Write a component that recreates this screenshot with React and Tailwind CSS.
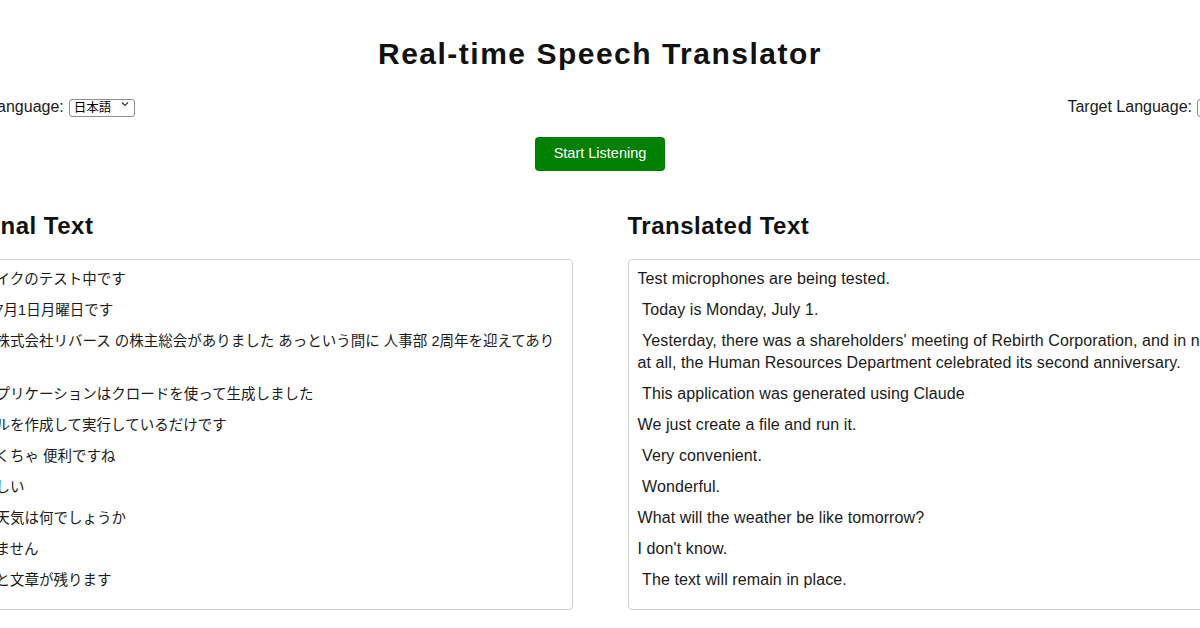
import React from 'react';

const original = [
  '現在マイクのテスト中です',
  '今日は7月1日月曜日です',
  '昨日は株式会社リバース の株主総会がありました あっという間に 人事部 2周年を迎えてありました',
  'このアプリケーションはクロードを使って生成しました',
  'ファイルを作成して実行しているだけです',
  'めちゃくちゃ 便利ですね',
  '素晴らしい',
  '明日の天気は何でしょうか',
  'わかりません',
  'ちゃんと文章が残ります',
];

const translated = [
  'Test microphones are being tested.',
  ' Today is Monday, July 1.',
  " Yesterday, there was a shareholders' meeting of Rebirth Corporation, and in no time at all, the Human Resources Department celebrated its second anniversary.",
  ' This application was generated using Claude',
  'We just create a file and run it.',
  ' Very convenient.',
  ' Wonderful.',
  'What will the weather be like tomorrow?',
  "I don't know.",
  ' The text will remain in place.',
];

function LangSelect({ value }) {
  return (
    <div className="relative inline-block">
      <select
        defaultValue={value}
        className="appearance-none h-[18px] w-[66px] border border-[#8e8e8e] rounded-[3px] bg-white pl-[4px] text-[12.5px] leading-[16px] text-black outline-none"
      >
        <option>日本語</option>
        <option>English</option>
      </select>
      <svg className="absolute right-[6px] top-[6px] pointer-events-none" width="8" height="6" viewBox="0 0 8 6">
        <path d="M1 1.5 L4 4.5 L7 1.5" fill="none" stroke="#333" strokeWidth="1.1" />
      </svg>
    </div>
  );
}

function Panel({ title, lines, textClass }) {
  return (
    <div className="flex flex-col">
      <h2 className="text-[24px] leading-[26px] font-bold tracking-[0.5px] text-[#111] mb-[20px]">{title}</h2>
      <div className="flex-1 border border-[#cfcfcf] rounded-[4px] pt-[8px] pb-[9px] pl-[9px] pr-[5px]">
        {lines.map((l, i) => (
          <p key={i} className={`leading-[22px] text-[#1a1a1a] mb-[9px] whitespace-pre-wrap ${textClass}`}>
            {l}
          </p>
        ))}
      </div>
    </div>
  );
}

export default function App() {
  return (
    <div
      className="w-[1200px] h-[628px] overflow-hidden bg-white"
      style={{ fontFamily: '"Liberation Sans", Arial, "Noto Sans CJK JP", sans-serif' }}
    >
      <div className="w-[1316px] ml-[-58px]">
        <h1 className="text-center text-[30px] leading-[34px] font-bold tracking-[1.5px] text-[#111] pt-[37px]">
          Real-time Speech Translator
        </h1>

        <div className="flex justify-between items-center mt-[26px] ml-[-9px] mr-[-5px] h-[20px] text-[16px] text-[#1a1a1a]">
          <div className="flex items-center gap-[5px]">
            <span>Source Language:</span>
            <LangSelect value="日本語" />
          </div>
          <div className="flex items-center gap-[5px]">
            <span>Target Language:</span>
            <LangSelect value="English" />
          </div>
        </div>

        <div className="flex justify-center mt-[20px]">
          <button className="h-[34px] w-[130px] rounded-[4px] bg-[#008000] text-white text-[14.5px]">
            Start Listening
          </button>
        </div>

        <div className="grid grid-cols-2 gap-[55px] mt-[42px]">
          <Panel title="Original Text" lines={original} textClass="text-[14.5px] pr-[4px]" />
          <Panel title="Translated Text" lines={translated} textClass="text-[16px] tracking-[0.1px]" />
        </div>
      </div>
    </div>
  );
}
